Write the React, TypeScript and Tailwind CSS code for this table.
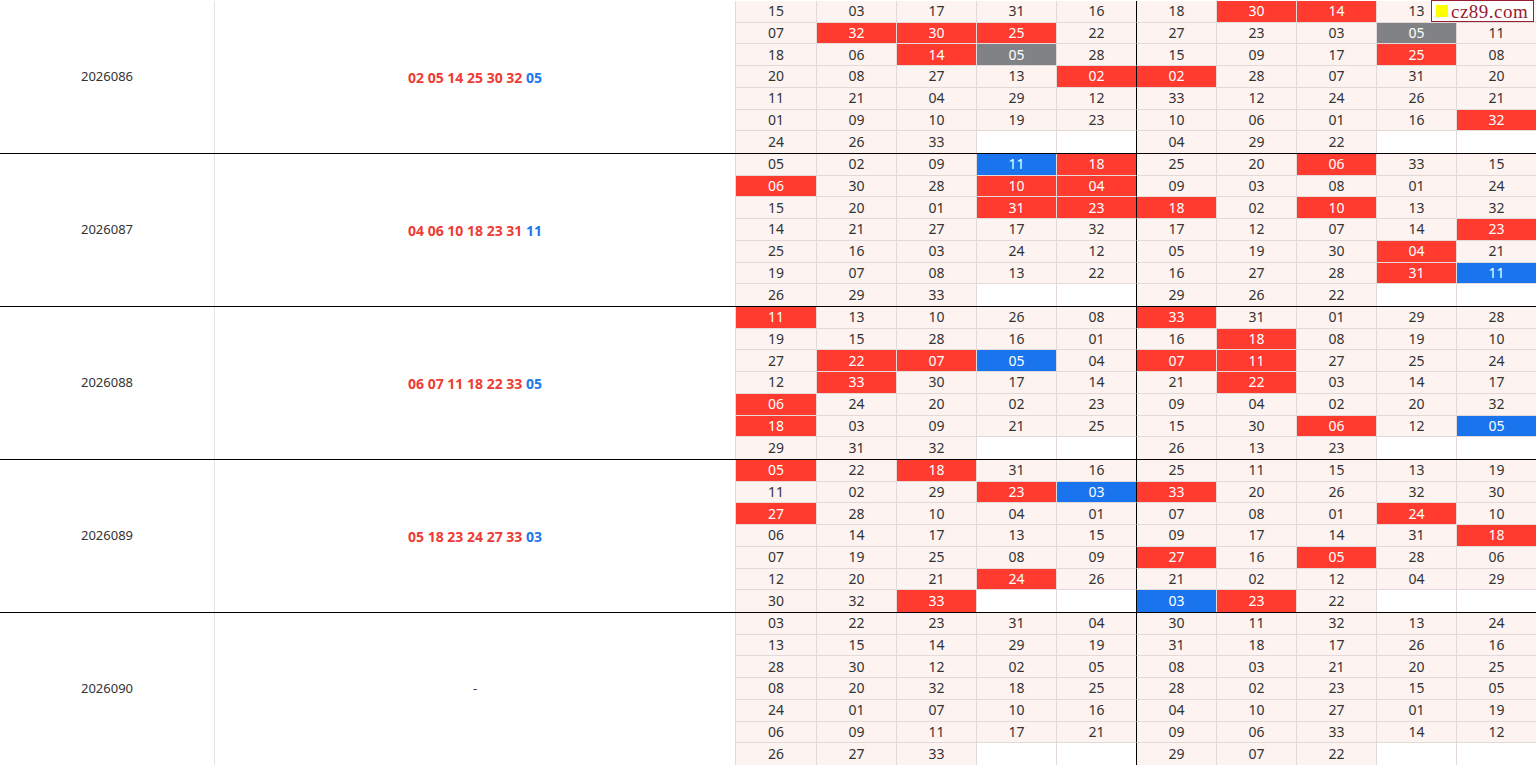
import React from 'react'

type Mark = '' | 'r' | 'b' | 'g' | 'h'

interface Draw {
  issue: string
  reds: string[]
  blue: string
  // 7 rows x 10 columns, "" = empty cell, suffix R/B/G marks the highlight, H = hidden under the watermark
  grid: string[][]
}

const draws: Draw[] = [
  {
    issue: '2026086',
    reds: ['02', '05', '14', '25', '30', '32'],
    blue: '05',
    grid: [
      ['15', '03', '17', '31', '16', '18', '30R', '14R', '13', 'H'],
      ['07', '32R', '30R', '25R', '22', '27', '23', '03', '05G', '11'],
      ['18', '06', '14R', '05G', '28', '15', '09', '17', '25R', '08'],
      ['20', '08', '27', '13', '02R', '02R', '28', '07', '31', '20'],
      ['11', '21', '04', '29', '12', '33', '12', '24', '26', '21'],
      ['01', '09', '10', '19', '23', '10', '06', '01', '16', '32R'],
      ['24', '26', '33', '', '', '04', '29', '22', '', ''],
    ],
  },
  {
    issue: '2026087',
    reds: ['04', '06', '10', '18', '23', '31'],
    blue: '11',
    grid: [
      ['05', '02', '09', '11B', '18R', '25', '20', '06R', '33', '15'],
      ['06R', '30', '28', '10R', '04R', '09', '03', '08', '01', '24'],
      ['15', '20', '01', '31R', '23R', '18R', '02', '10R', '13', '32'],
      ['14', '21', '27', '17', '32', '17', '12', '07', '14', '23R'],
      ['25', '16', '03', '24', '12', '05', '19', '30', '04R', '21'],
      ['19', '07', '08', '13', '22', '16', '27', '28', '31R', '11B'],
      ['26', '29', '33', '', '', '29', '26', '22', '', ''],
    ],
  },
  {
    issue: '2026088',
    reds: ['06', '07', '11', '18', '22', '33'],
    blue: '05',
    grid: [
      ['11R', '13', '10', '26', '08', '33R', '31', '01', '29', '28'],
      ['19', '15', '28', '16', '01', '16', '18R', '08', '19', '10'],
      ['27', '22R', '07R', '05B', '04', '07R', '11R', '27', '25', '24'],
      ['12', '33R', '30', '17', '14', '21', '22R', '03', '14', '17'],
      ['06R', '24', '20', '02', '23', '09', '04', '02', '20', '32'],
      ['18R', '03', '09', '21', '25', '15', '30', '06R', '12', '05B'],
      ['29', '31', '32', '', '', '26', '13', '23', '', ''],
    ],
  },
  {
    issue: '2026089',
    reds: ['05', '18', '23', '24', '27', '33'],
    blue: '03',
    grid: [
      ['05R', '22', '18R', '31', '16', '25', '11', '15', '13', '19'],
      ['11', '02', '29', '23R', '03B', '33R', '20', '26', '32', '30'],
      ['27R', '28', '10', '04', '01', '07', '08', '01', '24R', '10'],
      ['06', '14', '17', '13', '15', '09', '17', '14', '31', '18R'],
      ['07', '19', '25', '08', '09', '27R', '16', '05R', '28', '06'],
      ['12', '20', '21', '24R', '26', '21', '02', '12', '04', '29'],
      ['30', '32', '33R', '', '', '03B', '23R', '22', '', ''],
    ],
  },
  {
    issue: '2026090',
    reds: [],
    blue: '',
    grid: [
      ['03', '22', '23', '31', '04', '30', '11', '32', '13', '24'],
      ['13', '15', '14', '29', '19', '31', '18', '17', '26', '16'],
      ['28', '30', '12', '02', '05', '08', '03', '21', '20', '25'],
      ['08', '20', '32', '18', '25', '28', '02', '23', '15', '05'],
      ['24', '01', '07', '10', '16', '04', '10', '27', '01', '19'],
      ['06', '09', '11', '17', '21', '09', '06', '33', '14', '12'],
      ['26', '27', '33', '', '', '29', '07', '22', '', ''],
    ],
  },
]

const parseCell = (raw: string): { text: string; mark: Mark } => {
  if (raw === 'H') return { text: '', mark: 'h' }
  const last = raw.slice(-1)
  if (last === 'R') return { text: raw.slice(0, -1), mark: 'r' }
  if (last === 'B') return { text: raw.slice(0, -1), mark: 'b' }
  if (last === 'G') return { text: raw.slice(0, -1), mark: 'g' }
  return { text: raw, mark: '' }
}

const markClass: Record<Mark, string> = {
  '': 'bg-[#fdf4f2] text-[#333]',
  h: 'bg-[#fdf4f2] text-[#333]',
  r: 'bg-[#ff3a2f] text-white',
  b: 'bg-[#1a74ee] text-white',
  g: 'bg-[#808285] text-white',
}

const Cell = ({ raw, col, row }: { raw: string; col: number; row: number }) => {
  const { text, mark } = parseCell(raw)
  const leftBorder = col === 5 ? 'border-l-black' : 'border-l-[#e2d9d8]'
  const bottomBorder = row < 6 ? 'border-b border-b-[#e2d9d8]' : ''
  const fill = raw === '' ? 'bg-white' : markClass[mark]
  return (
    <div className={`flex items-center justify-center border-l ${leftBorder} ${bottomBorder} ${fill} text-[14px] leading-none`}>
      {text}
    </div>
  )
}

const DrawGroup = ({ draw }: { draw: Draw }) => (
  <div className="flex h-[153px] border-b border-black">
    {/* 期号 */}
    <div className="w-[215px] flex items-center justify-center border-r border-[#e2e2e2] text-[13px] text-[#333]">
      {draw.issue}
    </div>

    {/* 开奖号码 */}
    <div className="w-[520px] flex items-center justify-center text-[14px]">
      {draw.reds.length > 0 ? (
        <span className="font-bold">
          <span className="text-[#ee3b33]">{draw.reds.join(' ')}</span>{' '}
          <span className="text-[#1e78e8]">{draw.blue}</span>
        </span>
      ) : (
        <span className="text-[#333] text-[13px]">-</span>
      )}
    </div>

    {/* 号码矩阵 */}
    <div className="w-[801px] grid grid-cols-[81px_repeat(9,80px)] grid-rows-7">
      {draw.grid.map((row, r) =>
        row.map((raw, c) => <Cell key={`${r}-${c}`} raw={raw} col={c} row={r} />)
      )}
    </div>
  </div>
)

export default function App() {
  return (
    <div className="relative w-[1536px] h-[765px] overflow-hidden bg-white pt-[1px] font-['Noto_Sans','Open_Sans',sans-serif]">
      {draws.map((d) => (
        <DrawGroup key={d.issue} draw={d} />
      ))}

      {/* 水印 */}
      <div className="absolute top-0 right-[2px] h-[22px] w-[103px] flex items-center gap-[3px] pl-[4px] bg-white border border-[#9b1b30]">
        <span className="w-[12px] h-[12px] bg-[#ffff00] inline-block" />
        <span className="font-['Liberation_Serif',serif] text-[19px] leading-none text-[#9b1b30] tracking-[0.5px]">
          cz89.com
        </span>
      </div>
    </div>
  )
}
